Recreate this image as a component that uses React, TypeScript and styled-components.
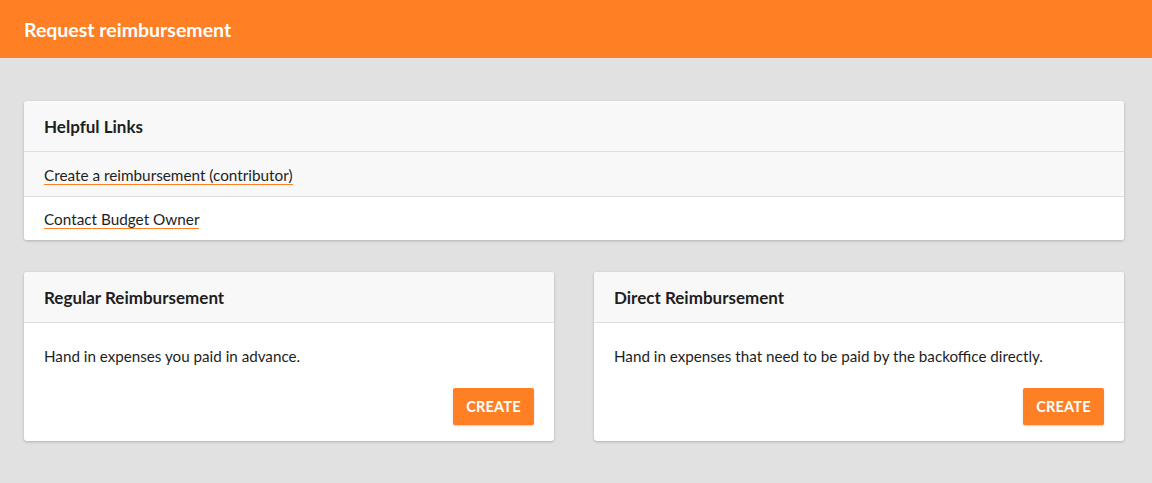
import * as React from 'react'
import styled, { createGlobalStyle } from 'styled-components'

const orange = '#ff8024'

const GlobalStyle = createGlobalStyle`
  html, body {
    margin: 0;
    padding: 0;
    background: #e1e1e1;
    font-family: Lato, "Open Sans", sans-serif;
    color: #1e1e1e;
  }
  * { box-sizing: border-box; }
`

const TopBar = styled.header`
  height: 58px;
  background: ${orange};
  display: flex;
  align-items: center;
  padding: 0 24px 0;

  h1 {
    margin: 0;
    font-size: 19.5px;
    font-weight: 700;
    color: #fff;
  }
`

const Main = styled.main`
  padding: 43px 28px 42px 24px;
  display: grid;
  gap: 32px;
`

const Card = styled.section`
  background: #fff;
  border-radius: 3px;
  box-shadow: 0 1px 3px rgba(0, 0, 0, 0.22);
  overflow: hidden;
  display: flex;
  flex-direction: column;
`

const CardHeader = styled.div`
  height: 51px;
  padding: 0 20px;
  display: flex;
  align-items: center;
  background: #f8f8f8;
  border-bottom: 1px solid #dedede;

  h2 {
    margin: 0;
    font-size: 17px;
    font-weight: 700;
    color: #1e1e1e;
  }
`

const LinkRow = styled.div<{ $shaded?: boolean }>`
  height: 44px;
  padding: 0 20px;
  display: flex;
  align-items: center;
  background: ${({ $shaded }) => ($shaded ? '#f8f8f8' : '#fff')};
  & + & {
    border-top: 1px solid #dedede;
  }
`

const Link = styled.a`
  font-size: 15.3px;
  color: #1e1e1e;
  text-decoration: none;
  border-bottom: 1.5px solid ${orange};
  line-height: 18px;
  padding-top: 2px;
`

const Columns = styled.div`
  display: grid;
  grid-template-columns: 1fr 1fr;
  gap: 40px;
`

const CardBody = styled.div`
  padding: 23px 20px 16px;
  display: flex;
  flex-direction: column;

  p {
    margin: 0;
    font-size: 15.2px;
    line-height: 20px;
  }
`

const Actions = styled.div`
  display: flex;
  justify-content: flex-end;
  margin-top: 22px;
`

const Button = styled.button`
  width: 81px;
  height: 37px;
  padding: 0;
  border: none;
  border-radius: 2px;
  background: ${orange};
  color: #fff;
  font-family: inherit;
  font-size: 14.5px;
  font-weight: 700;
  letter-spacing: 0.2px;
  box-shadow: 0 1px 2px rgba(0, 0, 0, 0.2);
  cursor: pointer;
`

const options = [
  { title: 'Regular Reimbursement', text: 'Hand in expenses you paid in advance.' },
  { title: 'Direct Reimbursement', text: 'Hand in expenses that need to be paid by the backoffice directly.' },
]

const App: React.FC = () => {
  return (
    <>
      <GlobalStyle />
      <TopBar>
        <h1>Request reimbursement</h1>
      </TopBar>
      <Main>
        <Card>
          <CardHeader>
            <h2>Helpful Links</h2>
          </CardHeader>
          <LinkRow $shaded>
            <Link href="#">Create a reimbursement (contributor)</Link>
          </LinkRow>
          <LinkRow>
            <Link href="#">Contact Budget Owner</Link>
          </LinkRow>
        </Card>
        <Columns>
          {options.map((o) => (
            <Card key={o.title}>
              <CardHeader>
                <h2>{o.title}</h2>
              </CardHeader>
              <CardBody>
                <p>{o.text}</p>
                <Actions>
                  <Button>CREATE</Button>
                </Actions>
              </CardBody>
            </Card>
          ))}
        </Columns>
      </Main>
    </>
  )
}

export default App
